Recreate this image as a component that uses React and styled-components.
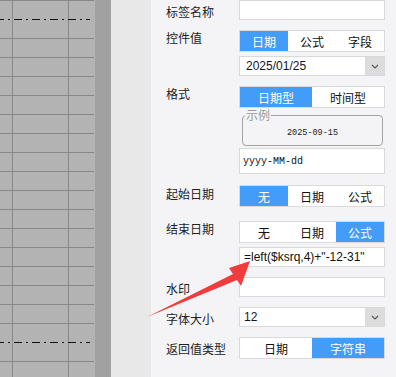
import React from 'react';
import styled, { createGlobalStyle, css } from 'styled-components';

const GlobalStyle = createGlobalStyle`
  html, body {
    margin: 0;
    padding: 0;
    background: #f4f4f7;
  }
  body {
    font-family: "Noto Sans CJK SC", "Liberation Sans", sans-serif;
    color: #1a1a1a;
  }
`;

const Page = styled.div`
  position: relative;
  display: flex;
  width: 396px;
  height: 377px;
  overflow: hidden;
`;

const Sheet = styled.div`
  width: 95px;
  flex: none;
  display: flex;
  flex-direction: column;
  background: #b3b3b3;
`;

const SheetRow = styled.div`
  height: 19px;
  flex: none;
  box-sizing: border-box;
  display: flex;
  border-top: 1px solid #878787;
  margin-right: 1px;
  ${(props) => props.dashed && css`
    border-top: none;
    padding-top: 1px;
    background-image: repeating-linear-gradient(to right,
      #111 0 8px, transparent 8px 12px, #111 12px 14px, transparent 14px 18px);
    background-size: 100% 1px;
    background-repeat: no-repeat;
    background-position: -4px 0;
  `}
`;

const SheetCell = styled.div`
  box-sizing: border-box;
  width: ${(props) => props.w ? `${props.w}px` : 'auto'};
  flex: ${(props) => props.w ? 'none' : '1'};
  border-right: ${(props) => props.line ? '1px solid #878787' : 'none'};
`;

const Splitter = styled.div`
  width: 16px;
  flex: none;
  background: #a1a1a1;
`;

const Gutter = styled.div`
  width: 40px;
  flex: none;
  background: #e8e8e8;
`;

const Panel = styled.div`
  flex: 1;
  display: flex;
  flex-direction: column;
  padding: 0 11px 0 15px;
  background: #f4f4f7;
`;

const FieldRow = styled.div`
  display: grid;
  grid-template-columns: 73px 146px;
  align-items: start;
  margin-top: ${(props) => props.space ?? 10}px;
`;

const Label = styled.div`
  font-size: 12px;
  color: #222;
  white-space: nowrap;
  height: 16px;
  line-height: ${(props) => props.lh || 24}px;
`;

const Fields = styled.div`
  display: flex;
  flex-direction: column;
`;

const SegGroup = styled.div`
  display: grid;
  grid-template-columns: repeat(${(props) => props.count}, 1fr);
  height: 22px;
  box-sizing: border-box;
  border: 1px solid #dadada;
  background: #fff;
`;

const Seg = styled.div`
  display: flex;
  align-items: center;
  justify-content: center;
  font-size: 12px;
  color: #111;
  ${(props) => props.active && css`
    background: #439cf8;
    color: #fff;
  `}
`;

const Input = styled.div`
  height: ${(props) => props.h || 20}px;
  box-sizing: border-box;
  border: 1px solid #d9d9d9;
  background: #fff;
  display: flex;
  align-items: center;
  padding-left: ${(props) => props.pad ?? 4}px;
  margin-top: ${(props) => props.gap || 0}px;
  font-family: ${(props) => props.mono ? '"Liberation Mono", monospace' : '"Liberation Sans", sans-serif'};
  font-size: ${(props) => props.mono ? '10px' : '12px'};
  color: #111;
  white-space: nowrap;
  overflow: hidden;
`;

const Select = styled.div`
  height: 20px;
  box-sizing: border-box;
  border: 1px solid #d9d9d9;
  background: #fff;
  display: flex;
  margin-top: ${(props) => props.gap || 0}px;
`;

const SelectValue = styled.div`
  flex: 1;
  display: flex;
  align-items: center;
  padding-left: ${(props) => props.pad ?? 5}px;
  font-family: "Liberation Sans", sans-serif;
  font-size: 12px;
  color: #141428;
`;

const DropButton = styled.div`
  width: 19px;
  flex: none;
  background: #dcdcdc;
  display: flex;
  align-items: center;
  justify-content: center;
`;

const Sample = styled.fieldset`
  margin: 1px 2px 0 3px;
  padding: 0 2px;
  border: 1px solid #a3a3a3;
  border-radius: 4px;
  min-inline-size: 0;
`;

const SampleLegend = styled.legend`
  padding: 0 1px;
  font-size: 12px;
  line-height: 12px;
  color: #9a9a9a;
`;

const SampleText = styled.div`
  padding: 6px 0;
  line-height: 12px;
  text-align: center;
  font-family: "Liberation Mono", monospace;
  font-size: 8.5px;
  color: #222;
`;

const Overlay = styled.svg`
  position: absolute;
  left: 0;
  top: 0;
  pointer-events: none;
`;

const Chevron = () => (
  <svg width="8" height="5" viewBox="0 0 8 5">
    <polyline points="1,1 4,4 7,1" fill="none" stroke="#555" strokeWidth="1.1" />
  </svg>
);

const Segments = ({ items, active }) => (
  <SegGroup count={items.length}>
    {items.map((item, i) => <Seg key={item} active={i === active}>{item}</Seg>)}
  </SegGroup>
);

const rows = Array.from({ length: 20 }, (_, i) => i);

const App = () => (
  <>
    <GlobalStyle />
    <Page>
      <Sheet>
        {rows.map((i) => (
          <SheetRow key={i} dashed={i === 1 || i === 18}>
            <SheetCell w={13} line />
            <SheetCell w={56} line />
            <SheetCell />
          </SheetRow>
        ))}
      </Sheet>
      <Splitter />
      <Gutter />
      <Panel>
        <FieldRow space={0}>
          <Label>标签名称</Label>
          <Fields><Input /></Fields>
        </FieldRow>
        <FieldRow>
          <Label lh={16}>控件值</Label>
          <Fields>
            <Segments items={['日期', '公式', '字段']} active={0} />
            <Select gap={4}>
              <SelectValue pad={6}>2025/01/25</SelectValue>
              <DropButton><Chevron /></DropButton>
            </Select>
          </Fields>
        </FieldRow>
        <FieldRow>
          <Label lh={16}>格式</Label>
          <Fields>
            <Segments items={['日期型', '时间型']} active={0} />
            <Sample>
              <SampleLegend>示例</SampleLegend>
              <SampleText>2025-09-15</SampleText>
            </Sample>
            <Input h={26} mono gap={2} pad={3}>yyyy-MM-dd</Input>
          </Fields>
        </FieldRow>
        <FieldRow space={11}>
          <Label lh={18}>起始日期</Label>
          <Fields><Segments items={['无', '日期', '公式']} active={0} /></Fields>
        </FieldRow>
        <FieldRow space={14}>
          <Label lh={16}>结束日期</Label>
          <Fields>
            <Segments items={['无', '日期', '公式']} active={2} />
            <Input gap={4}>=left($ksrq,4)+"-12-31"</Input>
          </Fields>
        </FieldRow>
        <FieldRow>
          <Label>水印</Label>
          <Fields><Input /></Fields>
        </FieldRow>
        <FieldRow>
          <Label>字体大小</Label>
          <Fields>
            <Select>
              <SelectValue pad={4}>12</SelectValue>
              <DropButton><Chevron /></DropButton>
            </Select>
          </Fields>
        </FieldRow>
        <FieldRow>
          <Label>返回值类型</Label>
          <Fields><Segments items={['日期', '字符串']} active={1} /></Fields>
        </FieldRow>
      </Panel>
      <Overlay width="396" height="377" viewBox="0 0 396 377">
        <polygon points="147,317 233,274 229,268 250,261 241,286 237,280" fill="#f03c3c" />
      </Overlay>
    </Page>
  </>
);

export default App;
